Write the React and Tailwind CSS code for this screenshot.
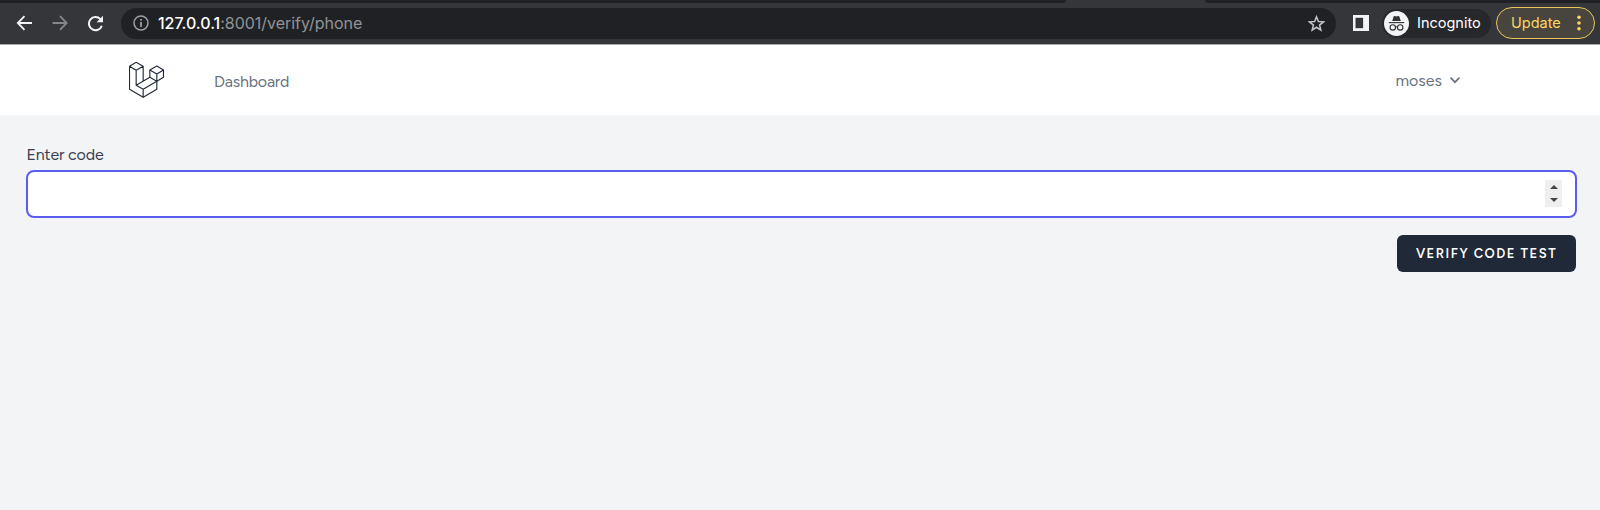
import React, { useState } from 'react';

const BrowserBar = () => {
  return (
    <header className="bg-[#202124] font-[Inter,Roboto,sans-serif]">
      {/* Bottom edge of the tab strip */}
      <div className="h-[3px] flex bg-[#35363a]">
        <div className="w-[1066px] shrink-0 rounded-br-[3px] bg-[#202124]" />
        <div className="w-[139px] shrink-0 bg-[#35363a]" />
        <div className="flex-1 rounded-bl-[3px] bg-[#202124]" />
      </div>

      <div className="h-[42px] bg-[#35363a] flex items-center pl-4 pr-[5px] pb-px border-b border-[#a8a9ab]">
        <svg className="w-4 h-4 shrink-0" viewBox="0 0 16 16" fill="none" stroke="#f1f3f4" strokeWidth="1.8">
          <path d="M16 8H2M8.5 1.2L1.8 8l6.7 6.8" />
        </svg>
        <svg className="w-4 h-4 shrink-0 ml-5" viewBox="0 0 16 16" fill="none" stroke="#85868a" strokeWidth="1.8">
          <path d="M0.5 8H14.5M8 1.2L14.7 8 8 14.8" />
        </svg>
        <svg className="w-[17px] h-[17px] shrink-0 ml-[19px]" viewBox="0 0 17 17">
          <path d="M14.8 10.7A6.6 6.6 0 1 1 13.4 4.2" fill="none" stroke="#f1f3f4" strokeWidth="2" />
          <path d="M16 0.8V7.2H9.6z" fill="#f1f3f4" />
        </svg>

        <div className="ml-[17px] w-[1215px] h-[31px] shrink-0 rounded-full bg-[#202124] flex items-center pl-3 pr-[11px]">
          <svg className="w-4 h-4" viewBox="0 0 16 16">
            <circle cx="8" cy="8" r="7" fill="none" stroke="#9aa0a6" strokeWidth="1.5" />
            <path d="M7.1 4h1.8v1.8H7.1zM7.1 7.1h1.8V12H7.1z" fill="#9aa0a6" />
          </svg>
          <span className="ml-[9px] text-[16px] leading-none tracking-[-0.02px] text-[#929397]">
            <span className="text-white font-medium">127.0.0.1</span>:8001/verify/phone
          </span>
          <svg className="w-[17px] h-[17px] ml-auto" viewBox="0 0 24 24" fill="none" stroke="#c4c7c9" strokeWidth="2.1">
            <path d="M12 2.5l2.7 6.7 7.2.5-5.6 4.5 1.8 7-6.1-3.9-6.1 3.9 1.8-7-5.6-4.5 7.2-.5z" />
          </svg>
        </div>

        <svg className="w-4 h-4 ml-[17px] shrink-0" viewBox="0 0 16 16">
          <path d="M0 0h16v16H0z" fill="#f1f3f4" />
          <path d="M2.5 2.8h7.6v10.4H2.5z" fill="#35363a" />
        </svg>

        <div className="ml-[13px] w-[109px] h-[29px] shrink-0 rounded-full bg-[#27282b] flex items-center pl-[2px]">
          <svg className="w-[25px] h-[25px]" viewBox="0 0 25 25">
            <circle cx="12.5" cy="12.5" r="12.5" fill="#f1f3f4" />
            <path d="M8.2 10l1.4-4.3q.3-.8 1.1-.6l1.8.4 1.8-.4q.8-.2 1.1.6L16.8 10z" fill="#303134" />
            <path d="M4.8 11.6h15.4" stroke="#303134" strokeWidth="1.1" />
            <g fill="none" stroke="#303134" strokeWidth="1.1">
              <circle cx="8.8" cy="16.4" r="2.7" />
              <circle cx="16.2" cy="16.4" r="2.7" />
              <path d="M11.5 16q1-.6 2 0" />
            </g>
          </svg>
          <span className="ml-2 mt-px text-[14.5px] leading-none text-white">Incognito</span>
        </div>

        <div className="ml-[5px] w-[99px] h-8 shrink-0 rounded-full border-[1.5px] border-[#e9c55a] bg-[#47453d] flex items-center pl-[14px] pr-[13px]">
          <span className="mt-px text-[14.5px] leading-none text-[#fdd663]">Update</span>
          <svg className="w-1 h-4 ml-auto" viewBox="0 0 4 16" fill="#fdd663">
            <circle cx="2" cy="2.3" r="1.8" />
            <circle cx="2" cy="8" r="1.8" />
            <circle cx="2" cy="13.7" r="1.8" />
          </svg>
        </div>
      </div>
    </header>
  );
};

const ApplicationLogo = () => (
  <svg className="w-9 h-[37px] shrink-0" viewBox="86.5 52 108 111" fill="none" stroke="#1f2937" strokeWidth="3.4" strokeLinejoin="round">
    <path d="M88 65L108 53L129 65V110M88 65L108 77L129 65M88 65V134L129 158L170 134V110L190 98V76L170 64L149 76V98L108 122V77" />
    <path d="M108 122L129 134V158M129 134L170 110V88L149 76M170 88L190 76M149 98L170 110" />
  </svg>
);

const Navigation = () => (
  <nav className="h-[70px] bg-white flex items-center pl-[129px] pr-[140px] text-[#6b7280] text-base">
    <ApplicationLogo />
    <a href="#dashboard" className="ml-[49px] mt-[4px] tracking-[-0.22px]">Dashboard</a>
    <button className="ml-auto mt-[2px] flex items-center">
      moses
      <svg className="w-[10px] h-[7px] ml-2 -mt-[2px]" viewBox="0 0 10 7" fill="none" stroke="#6b7280" strokeWidth="1.7">
        <path d="M1 1.2l4 4 4-4" strokeLinecap="round" />
      </svg>
    </button>
  </nav>
);

export default function App() {
  const [code, setCode] = useState('');

  const step = (amount) => setCode(String(Number(code) + amount));

  return (
    <div className="w-full h-[510px] overflow-hidden bg-[#f3f4f6] font-[Figtree,Lato,sans-serif]">
      <BrowserBar />
      <Navigation />

      <form className="pt-[27px] pl-[26px] pr-[23px]" onSubmit={(e) => e.preventDefault()}>
        <label htmlFor="code" className="block h-[28px] leading-[26px] pl-[0.5px] text-base tracking-[-0.16px] text-[#374151]">
          Enter code
        </label>
        <div className="h-12 rounded-lg border-2 border-[#5b5cf0] bg-white flex items-center pl-3 pr-[13px]">
          <input
            id="code"
            inputMode="numeric"
            className="flex-1 outline-none"
            value={code}
            onChange={(e) => setCode(e.target.value)}
          />
          <div className="w-[17px] h-[27px] -mt-px bg-[#efefef] flex flex-col items-center justify-between py-[5px]">
            <button type="button" aria-label="Increase" onClick={() => step(1)}>
              <svg className="w-2 h-1 block" viewBox="0 0 8 4" fill="#454545"><path d="M0 4L4 0l4 4z" /></svg>
            </button>
            <button type="button" aria-label="Decrease" onClick={() => step(-1)}>
              <svg className="w-2 h-1 block" viewBox="0 0 8 4" fill="#454545"><path d="M0 0h8L4 4z" /></svg>
            </button>
          </div>
        </div>

        <div className="flex justify-end mt-[17px] pr-px">
          <button className="w-[179px] h-[37px] rounded-md bg-[#1f2937] text-white text-[13px] font-semibold uppercase tracking-[1.5px] whitespace-nowrap">
            Verify code test
          </button>
        </div>
      </form>
    </div>
  );
}
